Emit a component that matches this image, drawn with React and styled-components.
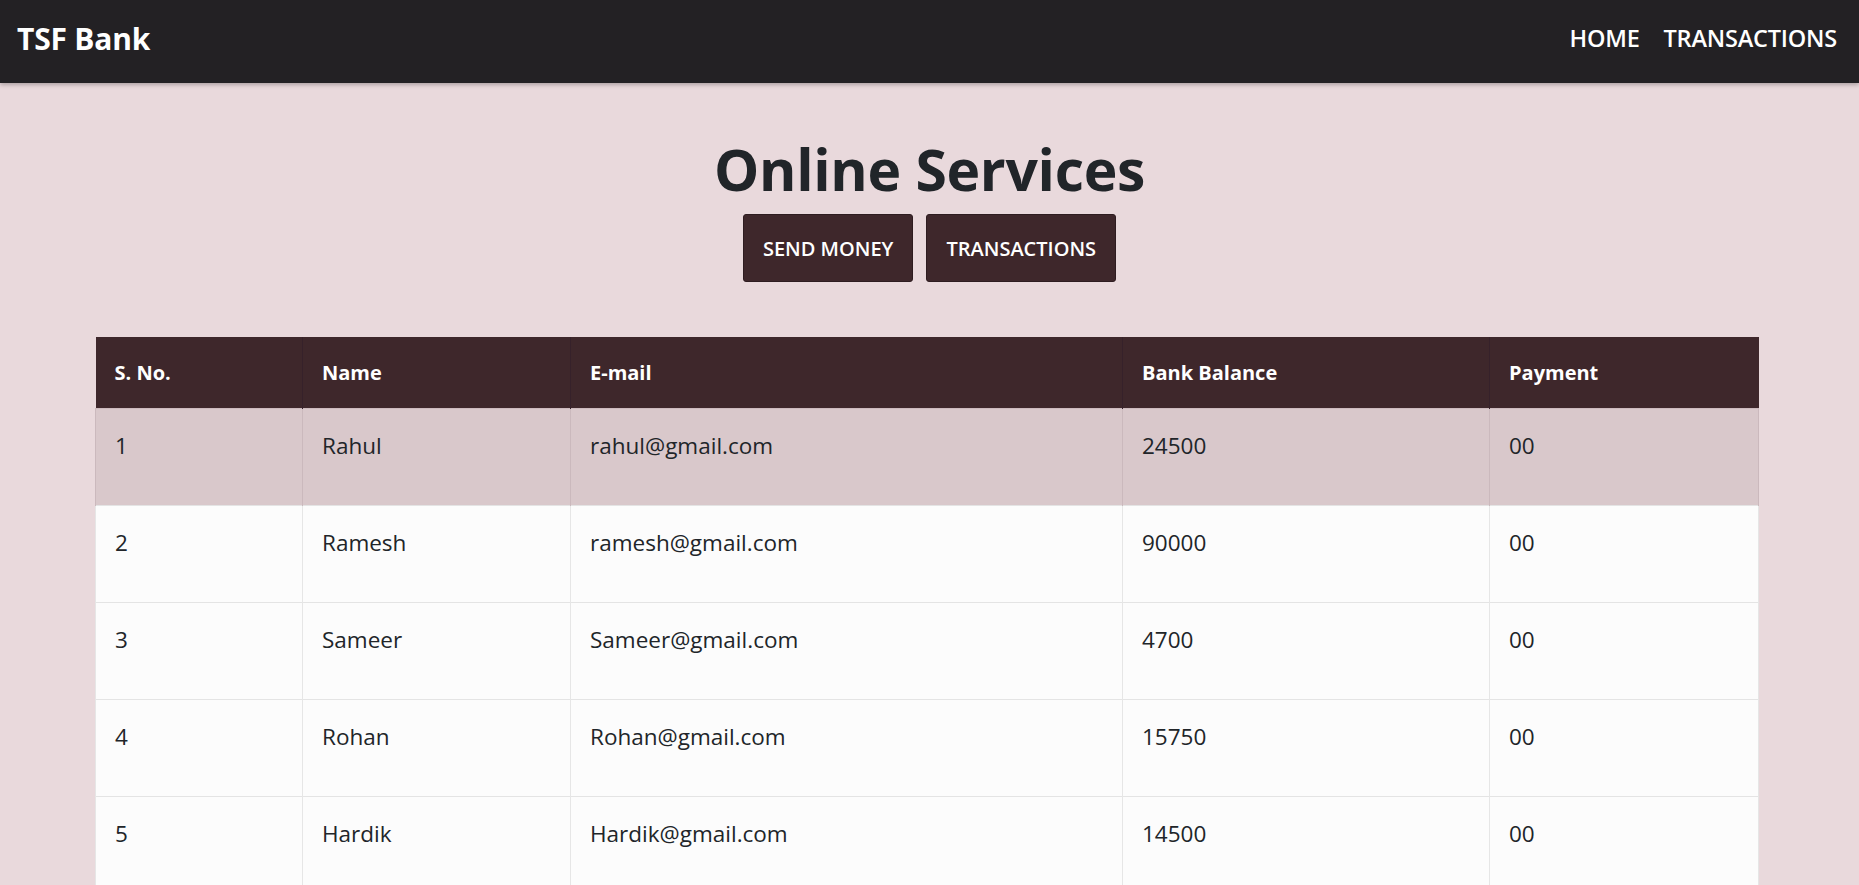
import React from "react";
import styled, { createGlobalStyle } from "styled-components";

const Global = createGlobalStyle`
  html, body { margin: 0; padding: 0; }
  body {
    background: #e9d9dc;
    font-family: "Open Sans", "Noto Sans", sans-serif;
    color: #212529;
  }
  * { box-sizing: border-box; }
`;

const Navbar = styled.nav`
  height: 83px;
  background: #232124;
  display: flex;
  align-items: center;
  justify-content: space-between;
  padding: 0 22px 7px 17px;
  box-shadow: 0 2px 4px rgba(0, 0, 0, 0.25);
  position: relative;
`;

const Brand = styled.a`
  color: #ffffff;
  font-size: 30px;
  font-weight: 700;
  text-decoration: none;
  letter-spacing: -0.2px;
`;

const NavLinks = styled.div`
  display: flex;
  gap: 24px;
`;

const NavLink = styled.a`
  color: #ffffff;
  font-size: 23.5px;
  font-weight: 600;
  text-decoration: none;
  letter-spacing: -0.2px;
`;

const Main = styled.main`
  display: flex;
  flex-direction: column;
  align-items: center;
  padding: 52px 0 0;
`;

const Heading = styled.h1`
  margin: 0;
  font-size: 57px;
  font-weight: 700;
  line-height: 1.2;
  color: #212529;
  letter-spacing: -0.3px;
`;

const ButtonRow = styled.div`
  display: flex;
  gap: 13px;
  margin-top: 11px;
`;

const ActionButton = styled.button`
  height: 68px;
  padding: 0 19px;
  background: #3e272b;
  color: #ffffff;
  border: 1px solid #2e1c20;
  border-radius: 3px;
  font-family: inherit;
  font-size: 20px;
  font-weight: 600;
  display: flex;
  align-items: center;
  cursor: pointer;
`;

const Table = styled.table`
  margin-top: 55px;
  align-self: flex-start;
  margin-left: 95px;
  width: 1663px;
  border-collapse: collapse;
  table-layout: fixed;
`;

const Th = styled.th`
  height: 71px;
  background: #3e272b;
  color: #ffffff;
  text-align: left;
  font-size: 20px;
  font-weight: 700;
  padding: 0 19px;
  border-right: 1px solid #36212a;
  vertical-align: middle;
  &:last-child { border-right: none; }
`;

const Tr = styled.tr`
  background: ${(p) => (p.$active ? "#d9c8cb" : "#fcfcfc")};
  border-top: 1px solid ${(p) => (p.$active ? "#cdbabe" : "#e4e4e4")};
`;

const Td = styled.td`
  height: 97px;
  padding: 20px 19px 0;
  vertical-align: top;
  font-size: 22.5px;
  line-height: 1.5;
  border-left: 1px solid ${(p) => (p.$active ? "#cbb9bd" : "#e6e6e6")};
  border-right: 1px solid ${(p) => (p.$active ? "#cbb9bd" : "#e6e6e6")};
  color: #212529;
`;

const cols = [207, 268, 552, 367, 269];

const rows = [
  ["1", "Rahul", "rahul@gmail.com", "24500", "00"],
  ["2", "Ramesh", "ramesh@gmail.com", "90000", "00"],
  ["3", "Sameer", "Sameer@gmail.com", "4700", "00"],
  ["4", "Rohan", "Rohan@gmail.com", "15750", "00"],
  ["5", "Hardik", "Hardik@gmail.com", "14500", "00"],
];

export default function App() {
  return (
    <>
      <Global />
      <Navbar>
        <Brand href="#">TSF Bank</Brand>
        <NavLinks>
          <NavLink href="#">HOME</NavLink>
          <NavLink href="#">TRANSACTIONS</NavLink>
        </NavLinks>
      </Navbar>
      <Main>
        <Heading>Online Services</Heading>
        <ButtonRow>
          <ActionButton>SEND MONEY</ActionButton>
          <ActionButton>TRANSACTIONS</ActionButton>
        </ButtonRow>
        <Table>
          <colgroup>
            {cols.map((w, i) => (
              <col key={i} style={{ width: w }} />
            ))}
          </colgroup>
          <thead>
            <tr>
              <Th>S. No.</Th>
              <Th>Name</Th>
              <Th>E-mail</Th>
              <Th>Bank Balance</Th>
              <Th>Payment</Th>
            </tr>
          </thead>
          <tbody>
            {rows.map((r, i) => (
              <Tr key={i} $active={i === 0}>
                {r.map((c, j) => (
                  <Td key={j} $active={i === 0}>
                    {c}
                  </Td>
                ))}
              </Tr>
            ))}
          </tbody>
        </Table>
      </Main>
    </>
  );
}
